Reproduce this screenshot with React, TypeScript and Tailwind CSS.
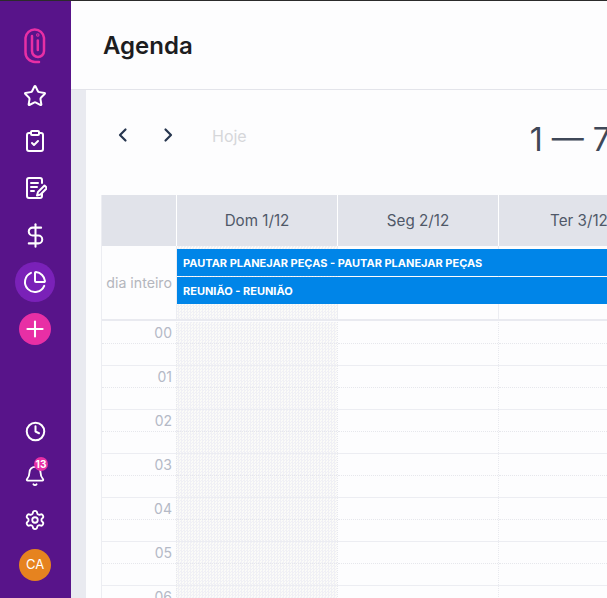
import { Star, ClipboardCheck, DollarSign, PieChart, Plus, Clock, Bell, Settings } from "lucide-react";

const days = ["Dom 1/12", "Seg 2/12", "Ter 3/12", "Qua 4/12", "Qui 5/12", "Sex 6/12", "Sáb 7/12"];
const hours = ["00", "01", "02", "03", "04", "05", "06"];
const todayBg =
  "bg-[repeating-conic-gradient(#f0f0f5_0_25%,#fbfbf8_0_50%)] bg-[length:3px_3px]";

function NoteIcon() {
  return (
    <svg width="24" height="24" viewBox="0 0 24 24" fill="none" stroke="currentColor" strokeWidth="2" strokeLinecap="round" strokeLinejoin="round">
      <path d="M19 7V4a2 2 0 0 0-2-2H6a2 2 0 0 0-2 2v16a2 2 0 0 0 2 2h11a2 2 0 0 0 2-2v-2" />
      <path d="M8 7h7M8 11h6M8 15h3" />
      <path d="M21.5 9.5 15 16l-1 3.5 3.5-1L24 12z" />
    </svg>
  );
}

function ClipLogo() {
  return (
    <svg width="22" height="37" viewBox="0 0 22 37" fill="none" stroke="#e82fa5" strokeWidth="2.5" strokeLinecap="round">
      <path d="M15 35H11A9.5 9.5 0 0 1 1.5 25.5V10.8A9.3 9.3 0 0 1 20 10.8V24A6 6 0 0 1 8 24V9" />
      <path d="M13.8 13.5V23" />
      <circle cx="13.8" cy="8" r="0.5" />
    </svg>
  );
}

function Chevron({ d, className }: { d: string; className: string }) {
  return (
    <svg width="20" height="20" viewBox="0 0 20 20" fill="none" stroke="currentColor" strokeWidth="2.2" strokeLinecap="round" strokeLinejoin="round" className={className}>
      <path d={d} />
    </svg>
  );
}

export default function App() {
  return (
    <div className="flex h-[598px] w-[607px] flex-col overflow-hidden bg-[#fdfdfe] font-['Inter',sans-serif]">
      <div className="h-px w-full shrink-0 bg-[#2b2b2b]" />
      <div className="flex min-h-0 flex-1">
        <aside className="flex w-[71px] shrink-0 flex-col items-center justify-between bg-[#58148a] pb-[17px] pr-px pt-[26px] text-white">
          <div className="flex flex-col items-center">
            <ClipLogo />
            <div className="mt-[20px] flex h-6 items-center"><Star size={24} strokeWidth={2} /></div>
            <div className="mt-[21px] flex h-6 items-center"><ClipboardCheck size={24} strokeWidth={2} /></div>
            <div className="mt-[23px] flex h-6 items-center"><NoteIcon /></div>
            <div className="mt-[23px] flex h-6 items-center"><DollarSign size={27} strokeWidth={1.8} /></div>
            <div className="mt-[15px] flex h-10 w-10 items-center justify-center rounded-full bg-[#7a21b8]"><PieChart size={24} strokeWidth={2} /></div>
            <div className="mt-[11px] flex h-8 w-8 items-center justify-center rounded-full bg-[#e82fa5]"><Plus size={26} strokeWidth={1.9} /></div>
          </div>
          <div className="flex flex-col items-center">
            <Clock size={21} strokeWidth={2.3} />
            <div className="relative mt-[23px] flex h-[22px] items-center">
              <Bell size={22} strokeWidth={2} />
              <span className="absolute -top-[8px] left-[10px] flex h-[14px] w-[14px] items-center justify-center rounded-full bg-[#e82fa5] text-[10px] font-bold text-white">13</span>
            </div>
            <div className="mt-[22px]"><Settings size={22} strokeWidth={2} /></div>
            <div className="mt-[18px] flex h-8 w-8 items-center justify-center rounded-full bg-[#e6831f] text-[13px]">CA</div>
          </div>
        </aside>

        <main className="flex min-w-0 flex-1 flex-col">
          <header className="flex h-[89px] shrink-0 items-center border-b border-[#e3e4ea] pl-[32px] pt-[2px]">
            <h1 className="text-[24px] font-semibold text-[#1d1d1f]">Agenda</h1>
          </header>
          <div className="flex min-h-0 flex-1">
            <div className="w-[15px] shrink-0 bg-[#e9eaf0]" />
            <div className="min-w-0 flex-1 overflow-hidden pl-[15px]">
              <div className="flex h-[105px] w-[560px] items-start pt-[35px] text-[#27364f]">
                <Chevron d="M12.5 4.5 7 10l5.5 5.5" className="ml-[12px]" />
                <Chevron d="M7.5 4.5 13 10l-5.5 5.5" className="ml-[25px]" />
                <span className="-mt-px ml-[34px] text-[16px] text-[#d6d7da]">Hoje</span>
                <span className="-mt-[9px] ml-[283px] whitespace-nowrap text-[32px] text-[#3f4858]">1 — 7</span>
              </div>

              <div className="w-[1200px] border-l border-[#ecedf2]">
                <div className="flex h-[51px] bg-[#e1e3ea]">
                  <div className="w-[74px] shrink-0" />
                  {days.map((d) => (
                    <div key={d} className="flex w-[161px] shrink-0 items-center justify-center border-l border-white pt-[2px] text-[15.2px] text-[#4f5868]">
                      {d}
                    </div>
                  ))}
                </div>

                <div className="flex h-[75px] border-b-2 border-[#e9eaf0]">
                  <div className="flex w-[74px] shrink-0 items-center justify-end pr-[4px] text-[14.2px] text-[#b4b6bd]">dia inteiro</div>
                  <div className="relative flex">
                    {days.map((d, i) => (
                      <div key={d} className={`w-[161px] shrink-0 border-l border-[#ecedf2] ${i === 0 ? todayBg : ""}`} />
                    ))}
                    <div className="absolute left-0 right-0 top-[3px] flex flex-col gap-px pl-px">
                      <div className="flex h-[27px] items-center bg-[#0085e8] pl-[6px] pt-[2px] text-[11px] font-bold text-white">PAUTAR PLANEJAR PEÇAS - PAUTAR PLANEJAR PEÇAS</div>
                      <div className="flex h-[27px] items-center bg-[#0085e8] pl-[6px] pt-[2px] text-[11px] font-bold text-white">REUNIÃO - REUNIÃO</div>
                    </div>
                  </div>
                </div>

                <div>
                  {hours.map((h) => (
                    <div key={h} className="flex h-[44px] border-t border-[#ecedf2] first:border-t-0 first:pt-px">
                      <div className="w-[74px] shrink-0">
                        <div className="flex h-[22px] items-center justify-end border-b border-dotted border-[#e6e7ec] pr-[4px] text-[14px] text-[#b4b9c6]">{h}</div>
                      </div>
                      {days.map((d, i) => (
                        <div key={d} className={`w-[161px] shrink-0 border-l border-dotted border-[#e8e9ee] ${i === 0 ? todayBg : ""}`}>
                          <div className="h-[22px] border-b border-dotted border-[#e6e7ec]" />
                        </div>
                      ))}
                    </div>
                  ))}
                </div>
              </div>
            </div>
          </div>
        </main>
      </div>
    </div>
  );
}
